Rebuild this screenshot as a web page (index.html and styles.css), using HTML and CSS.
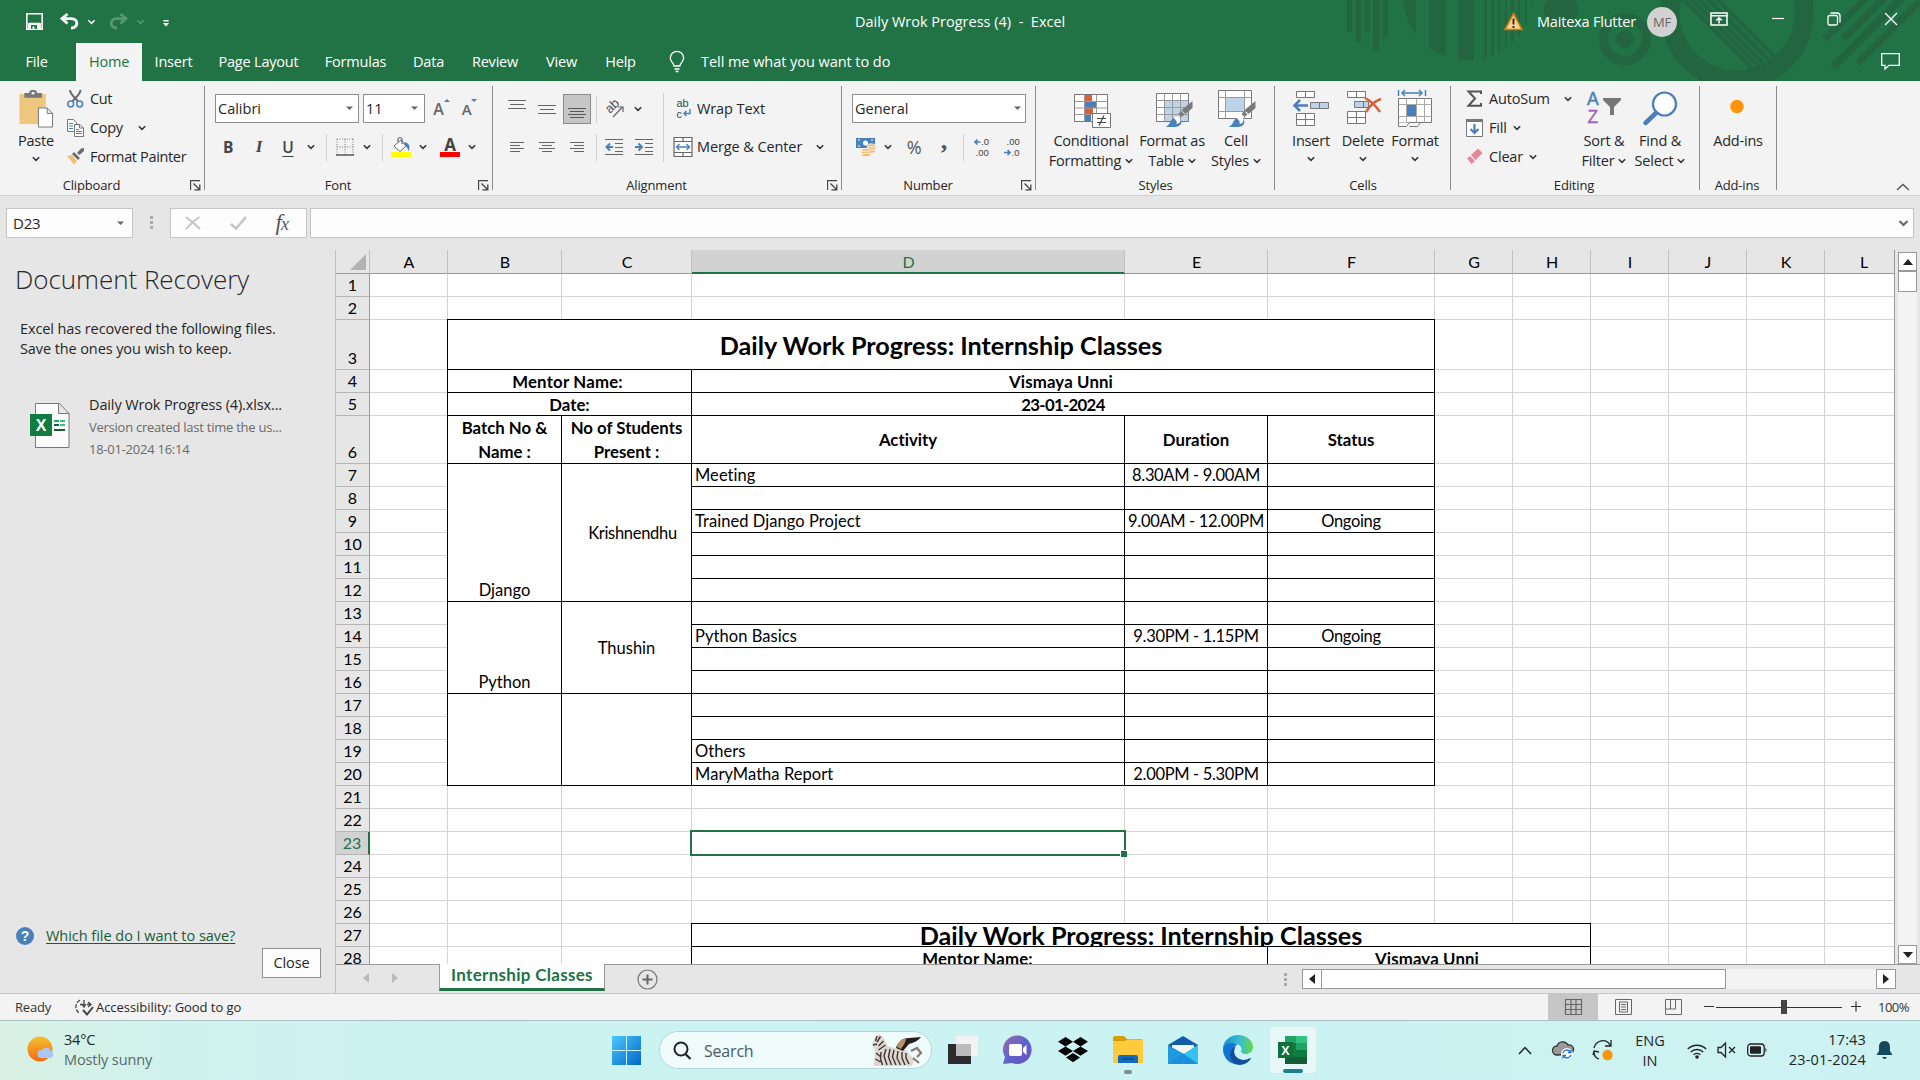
FILE: index.html
```html
<!DOCTYPE html>
<html lang="en">
<head>
<meta charset="utf-8">
<title>Daily Wrok Progress (4) - Excel</title>
<link rel="stylesheet" href="styles.css">
</head>
<body>
<svg class="defs" width="0" height="0">
  <symbol id="chev" viewBox="0 0 8 6"><path d="M.8 1.2 4 4.4 7.2 1.2" fill="none" stroke="currentColor" stroke-width="1.5"/></symbol>
  <symbol id="drop" viewBox="0 0 8 5"><path d="M0 .5h7L3.5 4z" fill="#666"/></symbol>
  <symbol id="launch" viewBox="0 0 11 11"><path d="M.5 10V.5H10M3.500 3.500 9.500 9.500M9.800 4.500V9.900H4.400" fill="none" stroke="#444" stroke-width="1.3"/></symbol>
  <symbol id="brush" viewBox="0 0 28 27"><path d="M27 0v7l-7 6-4-4z" fill="#7a7a7a"/><path d="m15.500 10 3.500 3.500-3 2.500-3-3z" fill="#7a7a7a"/><path d="M0 26c4-2 4-4 6-7 3-4 8-3 9.500 0s-1 7-6 7z" fill="#4a80b9"/><path d="M8 17c3-3 7-1 7 2s-3 4-4 4c1-3-1-4-3-6z" fill="#fff"/></symbol>
</svg>

<header class="titlebar">
  <svg class="art" width="590" height="81" viewBox="1330 0 590 81">
    <clipPath id="disc"><circle cx="1468" cy="-5" r="65"/></clipPath>
    <clipPath id="lens"><circle cx="1737" cy="14" r="58"/></clipPath>
    <g fill="#236441">
      <path d="M1347 0h5v32h-5zM1356 0h5v42h-5zM1365 0h5v32h-5zM1373 0h6v52h-6zM1383 0h5v38h-5z"/>
      <path clip-path="url(#disc)" d="M1403 0h13v60h-13zM1429 0h17v60h-17zM1458 0h16v60h-16zM1484 0h3v60h-3zM1491 0h3v60h-3zM1498 0h2v60h-2zM1505 0h2v60h-2zM1511 0h3v60h-3zM1518 0h2v60h-2zM1525 0h2v60h-2zM1531 0h3v60h-3z"/>
      <circle cx="1561" cy="10" r="17"/><circle cx="1625" cy="39" r="9"/>
    </g>
    <g fill="none" stroke="#236441">
      <circle cx="1625" cy="39" r="21.500" stroke-width="9"/>
      <circle cx="1737" cy="13" r="67" stroke-width="19"/>
      <g clip-path="url(#lens)" stroke-width="4"><path d="m1680-4 80 80M1688-4l80 80M1696-4l80 80M1705-4l80 80M1714-4l80 80"/></g>
      <path stroke-width="7" d="m1825 39 42-42M1843 39l42-42M1833 67l70-70M1858 63l66-66"/>
    </g>
  </svg>
  <div class="topline">
    <div class="quick">
      <svg width="17" height="17" viewBox="0 0 17 17"><path d="M.8.800h15.400v15.400H.8zM3 10.500h11" fill="none" stroke="#fff" stroke-width="1.600"/><path d="M2 10h13v6H2z" fill="#f3f3f3"/><path d="M5 12h6v4H5z" fill="#217346"/><path d="M6.500 13.500h2V16h-2z" fill="#fff"/></svg>
      <svg width="19" height="17" viewBox="0 0 19 17"><path d="M7.500 1 2 5.500l5.500 5M2.500 5.600H11c8 0 7.500 9.600 0 9.400" fill="none" stroke="#fff" stroke-width="2.800"/></svg>
      <svg class="ch" width="9" height="6"><use href="#chev"/></svg>
      <svg class="faint redo" width="19" height="17" viewBox="0 0 19 17"><path d="M11.500 1 17 5.500l-5.500 5M16.500 5.600H8c-8 0-7.500 9.600 0 9.400" fill="none" stroke="#fff" stroke-width="2.800"/></svg>
      <svg class="ch faint" width="9" height="6"><use href="#chev"/></svg>
      <svg class="more" width="6" height="7" viewBox="0 0 6 7"><path d="M.3.800h5.400" stroke="#fff" stroke-width="1.400"/><path d="M0 3h6L3 6.500z" fill="#fff"/></svg>
    </div>
    <div class="doctitle">Daily Wrok Progress (4)&nbsp; -&nbsp; Excel</div>
    <div class="account">
      <svg width="19" height="19" viewBox="0 0 19 19"><path d="M9.500 1.500 18 17.500H1z" fill="#fbd58c" stroke="#d9730d" stroke-width="1.600"/><path d="M9.500 6.500v6M9.500 14v2" stroke="#333" stroke-width="2"/></svg>
      <span>Maitexa Flutter</span><b class="avatar">MF</b>
    </div>
    <div class="winbtns">
      <svg width="18" height="14" viewBox="0 0 18 14"><path d="M1 1h16v12H1zM1 3.800h16M9 11.500V6M6.300 8.500 9 5.800l2.700 2.700" fill="none" stroke="#fff" stroke-width="1.500"/></svg>
      <svg width="14" height="14" viewBox="0 0 14 14"><path d="M1 6.500h12" stroke="#fff" stroke-width="1.200"/></svg>
      <svg width="14" height="14" viewBox="0 0 14 14"><rect x="1" y="3.500" width="9.500" height="9.500" rx="1.500" fill="none" stroke="#fff" stroke-width="1.300"/><path d="M3.500 1H10q3 0 3 3v6.500" fill="none" stroke="#fff" stroke-width="1.300"/></svg>
      <svg width="14" height="14" viewBox="0 0 14 14"><path d="m1 1 12 12M13 1 1 13" stroke="#fff" stroke-width="1.400"/></svg>
    </div>
  </div>
  <nav class="tabs">
    <span class="t-file">File</span><span class="t-home">Home</span><span class="w63">Insert</span><span class="w107">Page Layout</span><span class="w87">Formulas</span><span class="w59">Data</span><span class="w74">Review</span><span class="w59">View</span><span class="w59">Help</span>
    <svg class="bulb" width="16" height="22" viewBox="0 0 16 22"><path d="M5 15c0-3-3.700-4-3.700-8a6.600 6.600 0 0 1 13.300 0c0 4-3.700 5-3.700 8zM5.500 18h5M6.500 20.500h3" fill="none" stroke="#fff" stroke-width="1.300"/></svg>
    <span class="tell">Tell me what you want to do</span>
    <svg class="comment" width="19" height="17" viewBox="0 0 19 17"><path d="M.7.700h17.600v11.600H8L4 16v-3.700H.7z" fill="none" stroke="#fff" stroke-width="1.300"/></svg>
  </nav>
</header>

<section class="ribbon">
  <div class="group g-clip">
    <div class="body">
      <div class="big paste">
        <svg width="35" height="39" viewBox="0 0 35 39"><path d="M0 4h27v31H0z" fill="#eec77f"/><path d="M5 3h5V1.500L12 0h4l2 1.500V3h5v5H5z" fill="#777"/><path d="M12.500 2h3v2.500h-3z" fill="#eee"/><path d="M19.500 18.500h9l5.500 5.500v14H19.500zM28.500 18.500V24H34" fill="#fff" stroke="#777"/></svg>
        <span>Paste</span><svg class="ch" width="8" height="6"><use href="#chev"/></svg>
      </div>
      <div class="stack">
        <div><svg width="17" height="18" viewBox="0 0 17 18"><path d="M3 0c0 4 5 8 8 11M13.500 0c0 4-5 8-8 11" fill="none" stroke="#666" stroke-width="2"/><circle cx="3.700" cy="14" r="2.900" fill="none" stroke="#4a80b9" stroke-width="1.500"/><circle cx="12.700" cy="14" r="2.900" fill="none" stroke="#4a80b9" stroke-width="1.500"/></svg><span>Cut</span></div>
        <div><svg width="17" height="18" viewBox="0 0 17 18"><path d="M.5.500h6l3 3v9h-9z" fill="#fff" stroke="#777"/><path d="M2 4.500h4M2 7h4M2 9.500h4" stroke="#4a80b9"/><path d="M7.500 5.500h5.500l3.500 3.500v8.500h-9zM12.500 5.500V9h4" fill="#fff" stroke="#777"/><path d="M9 10.500h3M9 12.500h6M9 14.500h6" stroke="#4a80b9"/></svg><span>Copy</span><svg class="ch" width="8" height="6"><use href="#chev"/></svg></div>
        <div><svg width="17" height="17" viewBox="0 0 17 17"><path d="m0 8 5-1 5 6-3 3.500z" fill="#eec077"/><path d="m5 6 2-2 6 6-2 2zM10 5l4-4.500L17 0v3l-4.500 4z" fill="#6b6b6b"/></svg><span>Format Painter</span></div>
      </div>
    </div>
    <div class="label"><span>Clipboard</span><svg width="11" height="11"><use href="#launch"/></svg></div>
  </div>

  <div class="group g-font">
    <div class="body rows">
      <div class="row fontrow1">
        <div class="combo">Calibri<svg width="8" height="5"><use href="#drop"/></svg></div>
        <div class="combo">11<svg width="8" height="5"><use href="#drop"/></svg></div>
        <div class="grow">A<svg width="6" height="3"><path d="M0 3 3 0l3 3z" fill="#4a80b9"/></svg></div>
        <div class="grow small">A<svg width="6" height="3"><path d="M0 0h6L3 3z" fill="#4a80b9"/></svg></div>
      </div>
      <div class="row fontrow2">
        <b class="gl">B</b><i class="gl it">I</i><b class="gl un">U</b><svg class="ch" width="8" height="6"><use href="#chev"/></svg><hr>
        <svg width="18" height="18" viewBox="0 0 18 18"><path d="M1 1h16M1 9h16M1 1v16M9 1v16M17 1v16" stroke="#777" stroke-dasharray="1 1.500"/><path d="M0 17h18" stroke="#555" stroke-width="1.500"/></svg><svg class="ch" width="8" height="6"><use href="#chev"/></svg><hr>
        <svg width="20" height="20" viewBox="0 0 20 20"><path d="m3 9 7-6 5 6-6 5.500z" fill="#fff" stroke="#666"/><path d="M7 5V2q2-3 4 0v5" fill="none" stroke="#666" stroke-width="1.200"/><path d="M13 5c6 1 6 5 5 9-2-2-1-4-4-5z" fill="#4a80b9"/><path d="M0 15h20v5H0z" fill="#ff0"/></svg><svg class="ch" width="8" height="6"><use href="#chev"/></svg>
        <div class="fcolor"><b>A</b></div><svg class="ch" width="8" height="6"><use href="#chev"/></svg>
      </div>
    </div>
    <div class="label"><span>Font</span><svg width="11" height="11"><use href="#launch"/></svg></div>
  </div>

  <div class="group g-align">
    <div class="body">
      <div class="rows">
        <div class="row alrow">
          <svg width="18" height="20"><path d="M0 2.500h18M2 6.500h14M0 10.500h18" transform="translate(0 -1)" stroke="#666"/></svg>
          <svg width="18" height="20"><path d="M0 6.500h18M2 10.500h14M0 14.500h18" stroke="#666"/></svg>
          <div class="pressed"><svg width="18" height="20"><path d="M0 9.500h18M2 12.500h14M0 15.500h18M2 18.500h14" stroke="#555"/></svg></div><hr>
          <svg width="20" height="18" viewBox="0 0 20 18"><text x="0" y="0" transform="translate(6 14) rotate(-45)" font-size="13" fill="#555">ab</text><path d="M9 17 18.500 7M14 7h5v5" fill="none" stroke="#666" stroke-width="1.200"/></svg><svg class="ch" width="8" height="6"><use href="#chev"/></svg>
        </div>
        <div class="row alrow">
          <svg width="14" height="12"><path d="M0 1.500h14M0 4.500h10M0 7.500h14M0 10.500h10" stroke="#666"/></svg>
          <svg width="16" height="12"><path d="M0 1.500h16M3 4.500h10M0 7.500h16M3 10.500h10" stroke="#666"/></svg>
          <svg width="14" height="12"><path d="M0 1.500h14M4 4.500h10M0 7.500h14M4 10.500h10" stroke="#666"/></svg><hr>
          <svg width="18" height="18"><path d="M0 1.500h18M10 5.500h8M10 9.500h8M10 13.500h8M0 16.500h18" stroke="#666"/><path d="M8 9H2M5 5.500 1.500 9 5 12.500" fill="none" stroke="#4a80b9" stroke-width="2"/></svg>
          <svg width="18" height="18"><path d="M0 1.500h18M10 5.500h8M10 9.500h8M10 13.500h8M0 16.500h18" stroke="#666"/><path d="M0 9h6M3.500 5.500 7 9l-3.500 3.500" fill="none" stroke="#4a80b9" stroke-width="2"/></svg>
        </div>
      </div>
      <hr class="tall">
      <div class="rows wraps">
        <div class="row"><svg width="17" height="20" viewBox="0 0 17 20"><text x="2" y="8" font-size="11" fill="#444">ab</text><text x="2" y="19" font-size="11" fill="#444">c</text><path d="M15.500 10v4.500H9.500M12 12 9.500 14.500l2.500 2.500" fill="none" stroke="#4a80b9" stroke-width="1.400"/></svg><span>Wrap Text</span></div>
        <div class="row"><svg width="19" height="20" viewBox="0 0 19 20"><path d="M.5.500h18v19H.5zM.5 4.500h18M.5 15.500h18M9.500.500v4M9.500 15.500v4" fill="#fff" stroke="#666" stroke-width="1.200"/><path d="M3 10h13M6 7l-3 3 3 3M13 7l3 3-3 3" fill="none" stroke="#4a80b9" stroke-width="1.400"/></svg><span>Merge &amp; Center</span><svg class="ch" width="8" height="6"><use href="#chev"/></svg></div>
      </div>
    </div>
    <div class="label"><span>Alignment</span><svg width="11" height="11"><use href="#launch"/></svg></div>
  </div>

  <div class="group g-num">
    <div class="body rows">
      <div class="row"><div class="combo wide">General<svg width="8" height="5"><use href="#drop"/></svg></div></div>
      <div class="row numrow">
        <svg width="20" height="20" viewBox="0 0 20 20"><path d="M0 1h19v10H0z" fill="#4a80b9"/><circle cx="9.500" cy="6" r="2.500" fill="#fff"/><path d="M2 3h2M15 3h2M2 9h2" stroke="#fff"/><g fill="#eec077" stroke="#f3f3f3" stroke-width=".8"><ellipse cx="15" cy="8.500" rx="4.500" ry="1.700"/><ellipse cx="15" cy="11.500" rx="4.500" ry="1.700"/><ellipse cx="15" cy="14.500" rx="4.500" ry="1.700"/><ellipse cx="10" cy="13" rx="4.500" ry="1.700"/><ellipse cx="10" cy="15.700" rx="4.500" ry="1.700"/><ellipse cx="10" cy="18" rx="4.500" ry="1.700"/></g></svg>
        <svg class="ch" width="8" height="6"><use href="#chev"/></svg><span class="pct">%</span><span class="comma">,</span><hr>
        <svg width="16" height="20" viewBox="0 0 16 20"><text x="7" y="8" font-size="9.500" fill="#444">.0</text><text x="1.500" y="19" font-size="9.500" fill="#444">.00</text><path d="M6.500 5H1M3.500 2.500 1 5l2.500 2.500" fill="none" stroke="#4a80b9" stroke-width="1.700"/></svg>
        <svg width="16" height="20" viewBox="0 0 16 20"><text x="2.500" y="8" font-size="9.500" fill="#444">.00</text><text x="7.500" y="19" font-size="9.500" fill="#444">.0</text><path d="M0 15.500h5.500M3.500 13 6 15.500 3.500 18" fill="none" stroke="#4a80b9" stroke-width="1.700"/></svg>
      </div>
    </div>
    <div class="label"><span>Number</span><svg width="11" height="11"><use href="#launch"/></svg></div>
  </div>

  <div class="group g-styles">
    <div class="body">
      <div class="big w84"><svg width="37" height="38" viewBox="-1 0 37 38"><path d="M.5 4.500h33v27H.5z" fill="#fff" stroke="#777"/><path d="M11 5h7v6h-7zM11 18h8v6h-8z" fill="#d9603b"/><path d="M11 12h11v6H11zM11 25h6v6h-6z" fill="#4a80b9"/><path d="M.5 11.500h33M.5 18h33M.5 24.500h33M10.500 4.500v27M22.500 4.500v27" stroke="#999" fill="none"/><path d="M18.500 23.500h18v14h-18z" fill="#fff" stroke="#777"/><path d="M23 28.500h9M23 32.500h9M30 25.500l-5 10" stroke="#444" stroke-width="1.200"/></svg><span>Conditional</span><span>Formatting <svg class="ch" width="8" height="6"><use href="#chev"/></svg></span></div>
      <div class="big w70"><svg width="37" height="38" viewBox="-2 0 37 38"><path d="M.5 3.500h32v28H.5z" fill="#fff" stroke="#777"/><path d="M9 11h23v20H9z" fill="#bfd3e8"/><path d="M.5 10.500h32M.5 17.500h32M.5 24.500h32M8.500 3.500v28M16.500 3.500v28M24.500 3.500v28" stroke="#999"/><use href="#brush" x="9.500" y="11" width="28" height="27"/></svg><span>Format as</span><span>Table <svg class="ch" width="8" height="6"><use href="#chev"/></svg></span></div>
      <div class="big w60"><svg width="38" height="38" viewBox="-1 0 38 38"><path d="M.5.500h33v28H.5z" fill="#fff" stroke="#777"/><path d="M.5 7.500h33M.5 21.500h33M7.500.500v28M26.500.500v28" stroke="#999"/><path d="M8 8h18v13H8z" fill="#bfd3e8"/><use href="#brush" x="10.500" y="11" width="28" height="27"/></svg><span>Cell</span><span>Styles <svg class="ch" width="8" height="6"><use href="#chev"/></svg></span></div>
    </div>
    <div class="label"><span>Styles</span></div>
  </div>

  <div class="group g-cells">
    <div class="body">
      <div class="big w50"><svg width="36" height="38" viewBox="0 0 36 38"><path d="M3.500 1.500h18v6h-18zM12.500 1.500v6M3.500 23.500h18v12h-18zM12.500 23.500v12M3.500 29.500h18" fill="#fff" stroke="#777"/><path d="M17.500 12.500h18v6h-18zM26.500 12.500v6" fill="#bfd3e8" stroke="#777"/><path d="M15 15.500H2M7 10l-5.500 5.500L7 21" fill="none" stroke="#4a80b9" stroke-width="2.500"/></svg><span>Insert</span><svg class="ch" width="8" height="6"><use href="#chev"/></svg></div>
      <div class="big w54"><svg width="36" height="38" viewBox="-1 0 36 38"><path d="M1.500 1.500h18v6h-18zM10.500 1.500v6M1.500 21.500h18v12h-18zM10.500 21.500v12M1.500 27.500h18" fill="#fff" stroke="#777"/><path d="M8.500 11.500h14v6h-14zM17.500 11.500v6" fill="#bfd3e8" stroke="#777"/><path d="M19 8c6 3 11 8 15 14M35 9c-6 2-12 8-15 13" fill="none" stroke="#d9603b" stroke-width="2.500"/></svg><span>Delete</span><svg class="ch" width="8" height="6"><use href="#chev"/></svg></div>
      <div class="big w50"><svg width="36" height="38" viewBox="0 0 36 38"><path d="M1.500 0v6M28.500 0v6M5 3h20M8 0 5 3l3 3M22 0l3 3-3 3" fill="none" stroke="#4a80b9" stroke-width="1.500"/><path d="M1.500 8.500h33v24h-33z" fill="#fff" stroke="#777"/><path d="M1.500 14.500h33M1.500 26.500h33M9.500 8.500v24M19.500 8.500v24M27.500 8.500v24" stroke="#aaa"/><path d="M10 15h9v11h-9z" fill="#4a80b9"/><path d="M1.500 32.500v4h8l3-4M12.500 36.500h8l3-4" fill="#fff" stroke="#777"/></svg><span>Format</span><svg class="ch" width="8" height="6"><use href="#chev"/></svg></div>
    </div>
    <div class="label"><span>Cells</span></div>
  </div>

  <div class="group g-edit">
    <div class="body">
      <div class="stack">
        <div><svg width="17" height="18" viewBox="0 0 17 18"><path d="M15 4V1.500H2.500L9 8.500l-6.500 7.300H15V13" fill="none" stroke="#555" stroke-width="2"/></svg><span>AutoSum</span><svg class="ch far" width="8" height="6"><use href="#chev"/></svg></div>
        <div><svg width="17" height="18" viewBox="0 0 17 18"><path d="M.5.500h16v17H.5z" fill="#fff" stroke="#777"/><path d="M0 0h17v3H0z" fill="#777"/><path d="M8.500 5v9M4.500 10l4 4 4-4" fill="none" stroke="#4a80b9" stroke-width="2.200"/></svg><span>Fill</span><svg class="ch" width="8" height="6"><use href="#chev"/></svg></div>
        <div><svg width="17" height="17" viewBox="0 0 17 17"><path d="M5 7 12 .500 16.500 5 9.500 12zM1 10.500 4 8l5 5-3.500 3z" fill="#e8869a"/></svg><span>Clear</span><svg class="ch" width="8" height="6"><use href="#chev"/></svg></div>
      </div>
      <div class="big w56"><svg width="36" height="38" viewBox="0 0 36 38"><text x="1" y="15" font-size="17.500" fill="#4a80b9" stroke="#4a80b9" stroke-width=".5">A</text><text x="1.500" y="32.500" font-size="17.500" fill="#9a5fb8" stroke="#9a5fb8" stroke-width=".3">Z</text><path d="M17 8h18v2l-7 7v8h-4v-8l-7-7z" fill="#777"/></svg><span>Sort &amp;</span><span>Filter <svg class="ch" width="8" height="6"><use href="#chev"/></svg></span></div>
      <div class="big w56"><svg width="36" height="38" viewBox="0 0 36 38"><circle cx="22.500" cy="14" r="11.500" fill="#fff" stroke="#4a80b9" stroke-width="2.200"/><path d="M14 23 3.500 33" stroke="#4a80b9" stroke-width="4.500" stroke-linecap="round"/></svg><span>Find &amp;</span><span>Select <svg class="ch" width="8" height="6"><use href="#chev"/></svg></span></div>
    </div>
    <div class="label"><span>Editing</span></div>
  </div>

  <div class="group g-add">
    <div class="body"><div class="big w77"><svg width="36" height="38"><circle cx="17" cy="16.500" r="6.700" fill="#ff9408"/></svg><span>Add-ins</span></div></div>
    <div class="label"><span>Add-ins</span></div>
  </div>
  <svg class="collapse" width="14" height="8"><path d="M1 7 7 1.500 13 7" fill="none" stroke="#555" stroke-width="1.400"/></svg>
</section>

<section class="formulabar">
  <div class="namebox">D23<svg width="8" height="5"><use href="#drop"/></svg></div>
  <svg class="grip" width="3" height="14"><path d="M0 0h3v3H0zM0 5h3v3H0zM0 10h3v3H0z" fill="#aaa"/></svg>
  <div class="fxbox">
    <svg width="16" height="14"><path d="M1 1c4 3 9 7 14 12M14.500 1C10 4 5 8 1 13" fill="none" stroke="#c4c4c4" stroke-width="2"/></svg>
    <svg width="17" height="14"><path d="m1 8 5 4.500L16 1" fill="none" stroke="#c4c4c4" stroke-width="2.600"/></svg>
    <i>f<small>x</small></i>
  </div>
  <div class="finput"><svg width="9" height="7"><path d="M.5 1 4.500 5l4-4" fill="none" stroke="#666" stroke-width="2"/></svg></div>
</section>

<main class="work">
  <aside class="recovery">
    <h1>Document Recovery</h1>
    <p>Excel has recovered the following files.<br>Save the ones you wish to keep.</p>
    <div class="file">
      <svg width="40" height="45" viewBox="0 0 40 45"><path d="M5.500.500h24l9.500 10v34H5.500zM28.500.500V10.500H39" fill="#fcfcfc" stroke="#777"/><path d="M24 18h5M24 27h5" stroke="#21a366" stroke-width="2"/><path d="M30 18h5M30 22h5" stroke="#33c481" stroke-width="2"/><path d="M24 22h5M30 27h5M24 27h11" stroke="#185c37" stroke-width="2"/><path d="M0 11h22v22H0z" fill="#107c41"/><text x="11" y="28" font-size="16" font-weight="700" fill="#fff" text-anchor="middle">X</text></svg>
      <div><strong>Daily Wrok Progress (4).xlsx...</strong><span>Version created last time the us...</span><span>18-01-2024 16:14</span></div>
    </div>
    <div class="help"><svg width="18" height="18"><circle cx="9" cy="9" r="9" fill="#4a80b9"/><text x="9" y="14" font-size="14" font-weight="700" fill="#fff" text-anchor="middle">?</text></svg><a>Which file do I want to save?</a></div>
    <button>Close</button>
  </aside>

  <div class="book">
    <div class="gridwrap">
      <div class="sheet">
        <div class="cols"><span class="corner"><svg width="16" height="16"><path d="M16 0v16H0z" fill="#b3b3b3"/></svg></span><span>A</span><span>B</span><span>C</span><span class="sel">D</span><span>E</span><span>F</span><span>G</span><span>H</span><span>I</span><span>J</span><span>K</span><span class="last">L</span></div>
        <div class="nums"><span>1</span><span>2</span><span>3</span><span>4</span><span>5</span><span>6</span><span>7</span><span>8</span><span>9</span><span>10</span><span>11</span><span>12</span><span>13</span><span>14</span><span>15</span><span>16</span><span>17</span><span>18</span><span>19</span><span>20</span><span>21</span><span>22</span><span class="sel">23</span><span>24</span><span>25</span><span>26</span><span>27</span><span>28</span></div>
        <div class="vlines"><i></i><i></i><i></i><i></i><i></i><i></i><i></i><i></i><i></i><i></i><i></i></div>
        <div class="hlines"><i></i><i></i><i></i><i></i><i></i><i></i><i></i><i></i><i></i><i></i><i></i><i></i><i></i><i></i><i></i><i></i><i></i><i></i><i></i><i></i><i></i><i></i><i></i><i></i><i></i><i></i><i></i></div>

        <div class="cell ttl t1">Daily Work Progress: Internship Classes</div>
        <div class="cell hd m1">Mentor Name:</div><div class="cell hd m2">Vismaya Unni</div>
        <div class="cell hd d1">Date:</div><div class="cell hd d2">23-01-2024</div>
        <div class="cell hd two h1">Batch No &amp;<br>Name :</div><div class="cell hd two h2">No of Students<br>Present :</div><div class="cell hd h3">Activity</div><div class="cell hd h4">Duration</div><div class="cell hd h5">Status</div>
        <div class="cell low b1">Django</div><div class="cell n1">Krishnendhu</div>
        <div class="cell low b2">Python</div><div class="cell n2">Thushin</div>
        <div class="cell b3"></div><div class="cell n3"></div>
        <div class="log">
          <div>Meeting</div><div>8.30AM - 9.00AM</div><div></div>
          <div></div><div></div><div></div>
          <div>Trained Django Project</div><div>9.00AM - 12.00PM</div><div>Ongoing</div>
          <div></div><div></div><div></div>
          <div></div><div></div><div></div>
          <div></div><div></div><div></div>
          <div></div><div></div><div></div>
          <div>Python Basics</div><div>9.30PM - 1.15PM</div><div>Ongoing</div>
          <div></div><div></div><div></div>
          <div></div><div></div><div></div>
          <div></div><div></div><div></div>
          <div></div><div></div><div></div>
          <div>Others</div><div></div><div></div>
          <div>MaryMatha Report</div><div>2.00PM - 5.30PM</div><div></div>
        </div>
        <div class="cell ttl t2">Daily Work Progress: Internship Classes</div>
        <div class="cell hd m3">Mentor Name:</div><div class="cell hd m4">Vismaya Unni</div>
        <div class="cursor"></div>
      </div>
      <div class="vscroll">
        <span class="sb"><svg width="10" height="6"><path d="M0 6 5 0l5 6z" fill="#222"/></svg></span><span class="thumb"></span><span class="space"></span><span class="sb"><svg width="10" height="6"><path d="M0 0h10L5 6z" fill="#222"/></svg></span>
      </div>
    </div>
    <div class="sheetbar">
      <svg class="nav1" width="6" height="10"><path d="M6 0v10L0 5z" fill="#bbb"/></svg><svg class="nav2" width="6" height="10"><path d="M0 0v10l6-5z" fill="#bbb"/></svg>
      <div class="sheettab">Internship Classes</div>
      <svg class="plus" width="21" height="21"><circle cx="10.500" cy="10.500" r="9.500" fill="none" stroke="#777" stroke-width="1.200"/><path d="M10.500 5.500v10M5.500 10.500h10" stroke="#666" stroke-width="2"/></svg>
      <svg class="grip" width="3" height="14"><path d="M0 0h3v3H0zM0 5h3v3H0zM0 10h3v3H0z" fill="#aaa"/></svg>
      <div class="hscroll"><span class="sb"><svg width="6" height="10"><path d="M6 0v10L0 5z" fill="#222"/></svg></span><span class="thumb"></span><span class="space"></span><span class="sb"><svg width="6" height="10"><path d="M0 0v10l6-5z" fill="#222"/></svg></span></div>
    </div>
  </div>
</main>

<footer class="status">
  <span class="ready">Ready</span>
  <svg width="19" height="17" viewBox="0 0 19 17"><path d="M5 1C-1 5 0 12 5 14.500" fill="none" stroke="#444" stroke-width="1.300" stroke-dasharray="4 1.500"/><path d="M5 5.500h4M9 1v6M7 5l2 3 2-3M12 5.500h4M13 3l3 2.500-3 2.500" fill="none" stroke="#444" stroke-width="1.300"/><path d="m8 11 4 4.500L18 8" fill="none" stroke="#444" stroke-width="2"/></svg>
  <span class="acc">Accessibility: Good to go</span>
  <div class="views">
    <span class="on"><svg width="17" height="16"><path d="M.5.500h16v15H.5zM.5 5.500h16M.5 10.500h16M6 .500v15M11 .500v15" fill="none" stroke="#666" stroke-width="1.200"/></svg></span>
    <span><svg width="17" height="16"><path d="M.5.500h16v15H.5zM4.500 3h8v10h-8zM6 5.500h5M6 8h5M6 10.500h5" fill="none" stroke="#666"/></svg></span>
    <span><svg width="17" height="16"><path d="M.5.500h16v15H.5zM.5 10h10V.500M5.500.500V10" fill="none" stroke="#666"/></svg></span>
  </div>
  <svg class="zoom" width="158" height="16"><path d="M0 7.500h10M12 8.500h126M147 7.500h10M152 2.500v10" stroke="#333" stroke-width="1.200"/><path d="M77 1h6v14h-6z" fill="#444"/></svg>
  <span class="pc">100%</span>
</footer>

<footer class="taskbar">
  <div class="weather">
    <svg width="29" height="28" viewBox="0 0 29 28"><defs><linearGradient id="sun" x2="0" y2="1"><stop stop-color="#f2c12e"/><stop offset="1" stop-color="#f4690f"/></linearGradient></defs><circle cx="13" cy="13" r="12.500" fill="url(#sun)"/><path d="M14 22a4 4 0 0 1 1-8 5 5 0 0 1 9 1 3.800 3.800 0 0 1 0 7z" fill="#a9c8f5"/></svg>
    <div><span>34°C</span><span class="dim">Mostly sunny</span></div>
  </div>
  <div class="apps">
    <svg class="start" width="29" height="29" viewBox="0 0 29 29"><defs><linearGradient id="win" x2="1" y2="1"><stop stop-color="#4cc8fb"/><stop offset="1" stop-color="#0067c8"/></linearGradient></defs><path d="M0 0h14v14H0zM15 0h14v14H15zM0 15h14v14H0zM15 15h14v14H15z" fill="url(#win)"/></svg>
    <div class="search">
      <svg width="19" height="19"><circle cx="8" cy="8" r="6.500" fill="none" stroke="#222" stroke-width="2"/><path d="m12.500 13 5 5" stroke="#222" stroke-width="2.200"/></svg><span>Search</span>
      <svg class="zebra" width="52" height="34" viewBox="0 0 52 34"><path d="M2 33c0-7 1-11 1-16L0 12 2 6l5-5 4 3 5 9c6 3 14 2 19 5l7 9-2 6z" fill="#e0d8d0"/><path d="M24 15c2-6 6-10 13-10l12-1c-3 4-8 6-12 7l-6 7z" fill="#24201e"/><path d="M25 14c1-5 5-8 9-9 0 4-3 8-5 11z" fill="#b9906b"/><path d="m39 18 6-3 4 5-4 4M41 25l6 5" fill="none" stroke="#8a7a70" stroke-width="2.200"/><path d="M5 3 3.500 8M8.500 3.500 5 9M11.500 8l-5 5M13.500 12l-7 5M4 20l5 4M3.500 26l5 3M14 16l-2 7 3 9M18 16l-1.500 8 3 8M22 17l-1.500 7 3.500 8M26 18l-1 7 3.500 7M30 19l0 6 3 7M34 20l0 5 3 6M9 19l-.5 7 2 6M1 12l4-1" fill="none" stroke="#3d3633" stroke-width="1.400"/></svg>
    </div>
    <svg width="30" height="28"><path d="M0 8h23v20H0z" fill="#2c2c2c"/><path d="M8 0h22v20H8z" fill="#f3f3f3"/><path d="M8 8h15v12H8z" fill="#bbb"/></svg>
    <svg width="30" height="29"><defs><linearGradient id="chat" x2="1" y2="1"><stop stop-color="#9a6aa8"/><stop offset=".5" stop-color="#5f63cc"/><stop offset="1" stop-color="#6a50c8"/></linearGradient></defs><path d="M0 28 2 21A14.300 14.300 0 1 1 9 27z" fill="url(#chat)"/><rect x="6" y="8" width="13" height="12" rx="2" fill="#fff"/><path d="m20 12 3.500-3v10L20 16z" fill="#fff"/></svg>
    <svg width="30" height="26"><path d="m7.500 0 7.500 4.700-7.500 4.700L0 4.700zM22.500 0 30 4.700l-7.500 4.700L15 4.700zM7.500 9.400l7.500 4.700-7.500 4.700L0 14.100zM22.500 9.400l7.500 4.700-7.500 4.700-7.500-4.700zM15 16l7 4.600-7 4.600-7-4.600z"/></svg>
    <div class="app run"><svg width="30" height="28"><path d="M0 2q0-2 2-2h9l3 3h15v8H0z" fill="#d99b00"/><path d="M0 5h12l3-1.500h15V27H0z" fill="#ffcb3d"/><path d="M5 21q0-2 2-2h16q2 0 2 2v6H5z" fill="#0f6cbd"/><path d="M9 23h12" stroke="#0a4a80" stroke-width="1.500"/></svg></div>
    <svg width="30" height="28"><path d="M0 9 15 0l15 9-4 6H4z" fill="#0f5cad"/><path d="M4 9h22v8H4z" fill="#f4f4f4"/><path d="M0 9l16 9 14-9v19H0z" fill="#1e9be0"/><path d="M0 28 30 9v19z" fill="#35c1f1"/><path d="M0 28l15-10.500L30 28z" fill="#1b8fdc"/></svg>
    <svg width="30" height="30" viewBox="0 0 30 30"><defs><linearGradient id="e1"><stop stop-color="#1b8ad6"/><stop offset=".55" stop-color="#35bfd0"/><stop offset="1" stop-color="#68d848"/></linearGradient></defs><path d="M0 14C0 6 7 0 15 0c9 0 15 6 15 12 0 5-4 7-7 7-4 0-5-2-5-3 1-1 1-4-2-6-5-3-13-1-16 4z" fill="url(#e1)"/><path d="M0 14c2-6 10-8 15-4-5 0-6 6-4 10 2 5 8 7 13 6 2 0 1 1-1 2C10 33 0 25 0 14z" fill="#1175cf"/><path d="M13 11c-4 6-1 13 7 14 3 0 5-1 7-2 1 0 1 1 0 2-6 7-16 6-19-1-2-5 0-11 5-13z" fill="#134d99"/></svg>
    <div class="app active"><svg width="30" height="29"><path d="M7 0h11v7H7z" fill="#21a366"/><path d="M18 0h11v7H18z" fill="#33c481"/><path d="M7 7h11v7H7z" fill="#107c41"/><path d="M18 7h11v7H18z" fill="#21a366"/><path d="M7 14h22v7H7z" fill="#107c41"/><path d="M7 21h22v7H7z" fill="#185c37"/><path d="M0 6h15v16H0z" fill="#0f7138"/><text x="7.500" y="18.500" font-size="12.500" font-weight="700" fill="#fff" text-anchor="middle">X</text></svg></div>
  </div>
  <div class="tray">
    <svg width="14" height="9"><path d="m1 8 6-6.500L13 8" fill="none" stroke="#222" stroke-width="1.500"/></svg>
    <svg class="cloud" width="21" height="20"><path d="M5 15a4.500 4.500 0 0 1 0-9 6 6 0 0 1 11-1 4.500 4.500 0 0 1 2 9z" fill="#999" stroke="#333" stroke-width="1.300"/><circle cx="15" cy="14" r="6" fill="#fff"/><path d="M11 13a4 4 0 0 1 7-1.500M19 9.500v3h-3M19 15a4 4 0 0 1-7 1.500M11 18.500v-3h3" fill="none" stroke="#1676d2" stroke-width="1.300"/></svg>
    <svg class="sync" width="21" height="22"><path d="M2 9C4 1 14-1 18 6M19 1v6h-6M2 13c0 3 2 6 5 7M1 16l1-4 5 1" fill="none" stroke="#222" stroke-width="1.300"/><circle cx="15.500" cy="16" r="5.200" fill="#ff9408"/></svg>
    <div class="lang"><span>ENG</span><span>IN</span></div>
    <svg class="wifi" width="20" height="17"><path d="M.8 7a13 13 0 0 1 18.400 0M3.800 10a9 9 0 0 1 12.400 0M6.600 12.800a5 5 0 0 1 6.800 0" fill="none" stroke="#222" stroke-width="1.400"/><circle cx="10" cy="15" r="1.800" fill="#222"/></svg>
    <svg class="vol" width="20" height="16"><path d="M1 5.500h3L8.500 1v14L4 10.500H1zM12 5l6 6M18 5l-6 6" fill="none" stroke="#222" stroke-width="1.300"/></svg>
    <svg class="batt" width="21" height="14"><rect x=".7" y="1" width="16.500" height="12" rx="3" fill="none" stroke="#222" stroke-width="1.300"/><rect x="3" y="3.200" width="11" height="7.600" rx="1" fill="#222"/><path d="M18.500 4.500q2 2.500 0 5z" fill="#222"/></svg>
    <div class="clock"><span>17:43</span><span>23-01-2024</span></div>
    <svg class="bell" width="17" height="20"><path d="M8.500 1c4 0 5.500 3 5.500 6v4l2.500 4H.5L3 11V7c0-3 1.500-6 5.500-6zM6 17h5q-2.500 4-5 0z" fill="#134a5c"/></svg>
  </div>
</footer>
</body>
</html>
```
FILE: styles.css
```css
*{box-sizing:border-box}
body{margin:0;width:1920px;height:1080px;overflow:hidden;display:flex;flex-direction:column;background:#e6e6e6;color:#262626;font:14.5px/20px "Open Sans","Noto Sans",sans-serif;letter-spacing:-.2px;white-space:nowrap}
svg{display:block;flex:none;overflow:visible}
svg text{font-family:"Liberation Sans",sans-serif;letter-spacing:0}
.defs{position:absolute}
hr{margin:0;border:0;width:1px;height:27px;background:#d0d0d0}
.ch{color:#333}

/* title bar */
.titlebar{position:relative;height:81px;background:#217346;color:#fff;flex:none}
.art{position:absolute;right:0;top:0;overflow:hidden}
.topline{position:relative;display:grid;grid-template-columns:855px 615px 300px 150px;height:43px;align-items:center}
.quick{display:flex;align-items:center;padding-left:26px;height:40px}
.quick>*:nth-child(2){margin-left:17px}
.quick .ch{color:#fff;margin-left:8px}
.quick .redo{margin-left:13px}
.quick .more{margin-left:18px;margin-top:3px}
.faint{opacity:.25}
.doctitle{letter-spacing:0}
.account{display:flex;align-items:center;padding-left:34px}
.account span{margin-left:14px}
.avatar{margin-left:11px;width:30px;height:30px;border-radius:50%;background:#d2d2d2;color:#666;font:13px/30px "Open Sans",sans-serif;text-align:center}
.winbtns{display:flex;justify-content:space-between;margin:-5px 0 0 -60px;width:188px}
.tabs{position:relative;display:flex;height:38px;line-height:38px;text-align:center}
.t-file{width:76px;padding-right:3px}
.t-home{width:66px;background:#f3f3f3;color:#217346}
.w63{width:63px}.w107{width:107px}.w87{width:87px}.w59{width:59px}.w74{width:74px}
.bulb{margin:8px 0 0 19px}
.tell{margin-left:16px;letter-spacing:-.05px}
.comment{margin:10px 20px 0 auto}

/* ribbon */
.ribbon{display:flex;height:115px;flex:none;background:#f3f3f3;border-bottom:1px solid #d0d0d0}
.group{display:flex;flex-direction:column;background:linear-gradient(#8a8a8a,#8a8a8a) right 5px/1px 104px no-repeat}
.body{display:flex;height:94px;padding-top:4px;flex:none}
.label{display:flex;align-items:center;font-size:13px;letter-spacing:-.15px;text-align:center}
.label span{flex:1}
.label svg{margin:0 4px 0 7px}
.g-clip{width:205px}.g-font{width:288px}.g-align{width:349px}.g-num{width:194px}.g-styles{width:239px}.g-cells{width:176px}.g-edit{width:249px}.g-add{width:77px}
.g-edit .label,.g-add .label{padding-right:3px}
.big{display:flex;flex-direction:column;align-items:center;text-align:center}
.big>svg:first-child{height:38px;margin:5px 0 3px}
.big>span{line-height:20px;display:flex;align-items:center;gap:4px}
.big>.ch{margin-top:5px}
.w84{width:84px;margin-left:13px}.w70{width:78px}.w60{width:50px}.w50{width:50px}.w54{width:54px}.w56{width:56px}.w77{width:76px}
.g-cells .w50:first-child{margin-left:11px}
.paste{width:58px;padding-left:14px}
.stack{display:flex;flex-direction:column;padding-left:9px;margin-top:-1px}
.stack>div{display:flex;align-items:center;height:29px}
.stack>div>svg:first-child{width:17px}
.stack>div>span{margin-left:6px;letter-spacing:-.35px}
.stack .ch{margin-left:6px}
.g-clip .stack .ch{margin-left:15px}
.g-edit .stack{padding-left:15px;width:125px}
.g-edit .stack>div>span{letter-spacing:-.2px}
.g-edit .stack .far{margin-left:14px}
.body.rows,.g-align .body{padding-top:0}
.rows{display:flex;flex-direction:column;gap:9px}
.rows .row:first-child{height:29px;margin-top:13px}
.row{display:grid;align-items:center;height:30px}
.row>*{justify-self:center}
.g-font .rows{padding-left:10px}
.combo{width:144px;height:29px;border:1px solid #8f8f8f;background:#fff;display:flex;align-items:center;justify-content:space-between;padding:0 4px 0 2px;letter-spacing:0}
.fontrow1{grid-template-columns:144px 66px 31px 27px}
.fontrow1 .combo+.combo{width:62px;padding-right:5px;margin-left:4px}
.grow{display:flex;font-size:16px;font-weight:600;color:#666;padding-left:2px}
.small{font-size:15px;padding-left:0;padding-top:1px}
.fontrow2{grid-template-columns:26px 36px 22px 24px 6px 31px 14px 16px 22px 22px 32px 12px}
.gl{font-size:15.500px;color:#444;font-weight:700}
.it{font-family:"Liberation Serif",serif;font-size:17px}
.un{text-decoration:underline;text-underline-offset:3px;font-weight:600}
.fcolor{height:20px;width:20px;border-bottom:5px solid #f00;text-align:center;line-height:15px;font-size:17px;color:#444}
.alrow{grid-template-columns:30px 30px 30px 8px 28px 20px;margin-left:9px}
.alrow:nth-child(2){grid-template-columns:30px 30px 30px 8px 28px 32px}
.pressed{width:28px;height:30px;border:1px solid #8a8a8a;background:#c6c6c6;display:grid;place-items:center}
.tall{height:69px;margin:12px 0 0 3px}
.g-align .rows:first-child{width:167px;flex:none}
.wraps{padding-left:9px}
.wraps .row{display:flex}
.wraps svg:first-child{width:20px}
.wraps span{margin-left:4px;letter-spacing:-.1px}
.wraps .ch{margin-left:14px}
.g-num .rows{padding-left:10px}
.wide{width:174px;justify-self:start;padding-right:3px}
.numrow{grid-template-columns:28px 16px 36px 24px 14px 23px 38px}
.pct{font-size:18px;color:#555}
.comma{font:700 26px/10px "Liberation Serif",serif;color:#555;padding-bottom:12px}
.collapse{margin:102px 0 0 119px}

/* formula bar */
.formulabar{display:flex;height:54px;flex:none;padding:12px 6px 12px 6px;align-items:center}
.namebox,.fxbox,.finput{height:30px;background:#fdfdfd;border:1px solid #c6c6c6;display:flex;align-items:center}
.namebox{width:127px;justify-content:space-between;padding:0 7px 0 6px;font-size:15px}
.formulabar .grip{margin:0 17px}
.fxbox{width:137px;justify-content:space-between;padding:0 18px 0 14px}
.fxbox i{font:italic 23px/24px "Liberation Serif",serif;color:#555;letter-spacing:-1px}
.fxbox small{font-size:18px}
.finput{flex:1;margin-left:3px;justify-content:flex-end;padding-right:5px}

/* recovery pane */
.work{display:flex;height:743px;flex:none}
.recovery{width:335px;flex:none;display:flex;flex-direction:column;align-items:flex-start;padding:10px 0 0 15px}
.recovery h1{margin:0;font-weight:300;font-size:26px;line-height:38px;letter-spacing:-.05px}
.recovery p{margin:21px 0 0 5px;letter-spacing:-.1px}
.file{display:flex;margin:44px 0 0 15px}
.file>div{margin:-9px 0 0 19px;display:flex;flex-direction:column;font-size:13px;line-height:22px;letter-spacing:-.25px;color:#6a6a6a}
.file strong{font-weight:400;font-size:14.500px;line-height:22px;letter-spacing:-.13px;color:#262626}
.help{display:flex;align-items:center;margin-top:auto}
.help svg{margin:-1px 1px 0 1px}
.help a{margin-left:11px;color:#185c37;text-decoration:underline;text-underline-offset:2px;letter-spacing:-.03px}
.recovery button{margin:2px 14px 15px auto;width:59px;height:30px;border:1px solid #8f8f8f;background:#fdfdfd;font:inherit;color:#262626;padding:0;letter-spacing:-.1px}

/* workbook */
.book{flex:1;display:flex;flex-direction:column;border-left:1px solid #c0c0c0}
.gridwrap{display:flex;height:714px;overflow:hidden}
.sheet{display:grid;grid-template-columns:34px 78px 114px 130px 433px 143px 167px repeat(5,78px) 69px;grid-template-rows:24px 23px 23px 50px 23px 23px 48px repeat(22,23px);width:1558px;flex:none;background:#fff;color:#000;font:16.500px/22px Lato,"Open Sans",sans-serif;font-variant-ligatures:none;letter-spacing:0}
.cols{grid-area:1/1/2/-1;display:grid;grid-template:24px/subgrid;background:#e6e6e6}
.cols span{height:24px;border-right:1px solid #c0c0c0;border-bottom:1px solid #999;text-align:center;font-size:16px;line-height:24px;padding-left:1px}
.cols .sel{background:#d2d2d2;border-bottom:2px solid #217346;color:#217346}
.cols .last{padding-left:9px;border-right:0}
.corner svg{margin:4px 0 0 13px}
.nums{grid-area:2/1/-1/2;display:grid;grid-template-rows:subgrid;background:#e6e6e6}
.nums span{border-bottom:1px solid #b5b5b5;border-right:1px solid #999;display:flex;align-items:flex-end;justify-content:center;font-size:16px;line-height:22px}
.nums .sel{background:#d2d2d2;border-right:2px solid #217346;color:#217346}
.vlines{grid-area:2/2/-1/-1;display:grid;grid-template-columns:subgrid}
.vlines i{border-right:1px solid #d4d4d4}
.hlines{grid-area:2/2/-1/-1;display:grid;grid-template-rows:subgrid}
.hlines i{border-bottom:1px solid #d4d4d4}
.cell,.log>div{margin:-1px 0 0 -1px;border:1px solid #000;background:#fff;display:flex;align-items:center;justify-content:center;text-align:center;overflow:hidden;line-height:21px;padding-top:1px}
.log{display:grid;grid-template:subgrid/subgrid;grid-area:8/5/22/8}
.log>div{letter-spacing:-.33px}
.log>div:nth-child(3n+1){justify-content:flex-start;padding-left:3px;letter-spacing:.06px}
.hd{font-weight:700;font-size:16.800px;padding-top:0}
.ttl{font-weight:700;font-size:25.200px}
.two{line-height:24px}
.low{align-items:flex-end;line-height:21px}
.t1{grid-area:4/3/5/8}
.m1{grid-area:5/3/6/5}.m2{grid-area:5/5/6/8}
.m1,.m3{letter-spacing:.2px;padding-right:4px}.m2,.m4{letter-spacing:.15px;padding-right:4px}
.d1{grid-area:6/3/7/5}.d2{grid-area:6/5/7/8;letter-spacing:-.7px}
.h1{grid-area:7/3}.h2{grid-area:7/4}.h3{grid-area:7/5}.h4{grid-area:7/6}.h5{grid-area:7/7}
.b1{grid-area:8/3/14/4}.n1{grid-area:8/4/14/5;padding-left:12px;letter-spacing:-.3px}
.b2{grid-area:14/3/18/4}.n2{grid-area:14/4/18/5}
.b3{grid-area:18/3/22/4}.n3{grid-area:18/4/22/5}
.t2{grid-area:28/5/29/10}
.m3{grid-area:29/5/30/7}.m4{grid-area:29/7/30/10}
.cursor{grid-area:24/5;border:2px solid #217346;margin:-2px -1px -1px -2px;position:relative}
.cursor::after{content:"";position:absolute;right:-3px;bottom:-3px;width:6px;height:6px;background:#217346;border:1px solid #fff;border-width:1px 0 0 1px}
.sb{display:grid;place-items:center;background:#fff;border:1px solid #999;flex:none}
.thumb{background:#fff;border:1px solid #999;flex:none}
.vscroll{flex:1;display:flex;flex-direction:column;padding:2px 3px 0 3px;border-left:1px solid #999}
.vscroll .sb{height:19px}
.vscroll .thumb{height:21px}
.vscroll .space{flex:1;background:#f3f3f3}
.sheetbar{display:flex;height:29px;border-top:1px solid #999}
.nav1{margin:8px 0 0 27px}.nav2{margin:8px 0 0 23px}
.sheettab{width:166px;height:27px;margin:-1px 0 0 41px;background:#fff;border:1px solid #999;border-top:0;border-bottom:3px solid #217346;text-align:center;font:700 17px/22px Lato,sans-serif;letter-spacing:.3px;font-variant-ligatures:none;color:#217346}
.plus{margin:4px 0 0 32px}
.sheetbar .grip{margin:8px 15px 0 auto}
.hscroll{display:flex;width:594px;height:20px;margin:4px 24px 0 0}
.hscroll .sb{width:20px}
.hscroll .thumb{width:405px;margin-left:-1px}
.hscroll .space{flex:1;background:#f3f3f3}

/* status bar */
.status{display:flex;align-items:center;height:27px;flex:none;background:#f3f3f3;border-top:1px solid #c6c6c6;font-size:13px;letter-spacing:-.1px;color:#333}
.ready{margin:0 24px 0 15px;letter-spacing:-.2px}
.acc{margin-left:2px;letter-spacing:-.05px;color:#262626}
.views{margin-left:auto;display:flex;height:26px}
.views span{width:50px;display:grid;place-items:center}
.views .on{background:#c6c6c6}
.zoom{margin-left:6px}
.pc{width:58px;padding-right:11px;text-align:right;letter-spacing:-.5px}

/* taskbar */
.taskbar{position:relative;display:flex;flex:1;border-top:1px solid #a9bfbf;background:linear-gradient(90deg,#d9f1e4,#cff2ee 180px,#caf3f2 600px,#cdf2f3);align-items:center;padding-bottom:1px}
.weather{display:flex;width:612px;align-items:center;padding-left:27px;margin-top:-1px}
.weather div{margin-left:8px}
.weather span,.lang span,.clock span{display:block}
.dim{color:#56686a;letter-spacing:-.1px}
.apps{display:flex;align-items:center;gap:25px}
.start{margin-right:-7px}
.search{display:flex;align-items:center;width:273px;height:38px;border:1px solid #b4d8d8;border-radius:19px;background:#f0fcfc;padding-left:13px;margin-right:-9px;color:#4a5a5a;font-size:16px}
.search span{margin-left:12px;padding-top:1px}
.zebra{margin-left:auto;margin-right:7px}
.app{position:relative}
.run::after{content:"";position:absolute;left:11px;bottom:-10px;width:8px;height:4px;border-radius:2px;background:#7c8b8b}
.active{width:48px;height:48px;margin-left:-9px;padding:9px 0 0 8px;border-radius:5px;background:#e6f9f8;border:1px solid #d8ecec}
.active::after{content:"";position:absolute;left:13px;bottom:0;width:20px;height:4px;border-radius:2px;background:#21808f}
.tray{display:flex;align-items:center;margin-left:auto;padding-right:27px}
.cloud{margin-left:20px}.sync{margin-left:19px}
.lang{width:34px;margin-left:20px;padding-top:1px;text-align:center;letter-spacing:0}
.wifi{margin-left:20px}.vol{margin-left:10px}.batt{margin-left:10px}
.clock{width:84px;margin-left:14px;text-align:right;letter-spacing:.15px}
.bell{margin-left:10px}
```
